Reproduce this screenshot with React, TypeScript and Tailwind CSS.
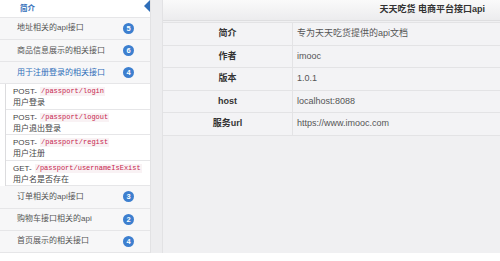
const font = { fontFamily: '"Liberation Sans", "Noto Sans CJK SC", sans-serif' };

interface Group {
  name: string;
  count: number;
  active?: boolean;
}

interface Api {
  method: string;
  path: string;
  desc: string;
}

const topGroups: Group[] = [
  { name: '地址相关的api接口', count: 5 },
  { name: '商品信息展示的相关接口', count: 6 },
  { name: '用于注册登录的相关接口', count: 4, active: true },
];

const apis: Api[] = [
  { method: 'POST', path: '/passport/login', desc: '用户登录' },
  { method: 'POST', path: '/passport/logout', desc: '用户退出登录' },
  { method: 'POST', path: '/passport/regist', desc: '用户注册' },
  { method: 'GET', path: '/passport/usernameIsExist', desc: '用户名是否存在' },
];

const bottomGroups: Group[] = [
  { name: '订单相关的api接口', count: 3 },
  { name: '购物车接口相关的api', count: 2 },
  { name: '首页展示的相关接口', count: 4 },
];

const info = [
  ['简介', '专为天天吃货提供的api文档'],
  ['作者', 'imooc'],
  ['版本', '1.0.1'],
  ['host', 'localhost:8088'],
  ['服务url', 'https://www.imooc.com'],
];

function GroupRow({ g }: { g: Group }) {
  return (
    <div className="h-[22.5px] flex items-center justify-between pl-[17px] pr-[16px] bg-[#f7f7f8] border-b border-[#e6e6e8]">
      <span className={`text-[8px] ${g.active ? 'text-[#2f6eb8]' : 'text-[#555]'}`}>{g.name}</span>
      <span className="w-[11px] h-[11px] rounded-full bg-[#3d7fcf] text-white text-[7.5px] font-bold flex items-center justify-center">
        {g.count}
      </span>
    </div>
  );
}

export default function App() {
  return (
    <div className="w-[500px] h-[261px] bg-white overflow-hidden" style={font}>
      <div className="flex h-[253px]">
        {/* Sidebar */}
        <div className="w-[151px] bg-white border-r border-[#e2e2e4] flex flex-col">
          <div className="h-[18px] flex items-center justify-between pl-[20px] border-b border-[#e6e6e8]">
            <span className="text-[7.5px] font-bold text-[#2f6eb8]">简介</span>
            <span className="w-0 h-0 border-y-[6px] border-y-transparent border-r-[6px] border-r-[#2f6eb8] mb-[4px]" />
          </div>
          {topGroups.map((g) => (
            <GroupRow key={g.name} g={g} />
          ))}
          <div className="pl-[5px] bg-white">
            <div className="border-l border-[#dcdcde]">
              {apis.map((a) => (
                <div key={a.path} className="h-[25.5px] pl-[7px] pt-[2px] border-b border-[#e6e6e8] leading-[11px]">
                  <div className="text-[8px] text-[#444] flex items-center">
                    {a.method}-
                    <span
                      className="ml-[3px] px-[1px] bg-[#f9f2f4] text-[#c7254e] text-[7px] leading-[9px]"
                      style={{ fontFamily: '"Liberation Mono", monospace' }}
                    >
                      {a.path}
                    </span>
                  </div>
                  <div className="text-[8px] text-[#444]">{a.desc}</div>
                </div>
              ))}
            </div>
          </div>
          {bottomGroups.map((g) => (
            <GroupRow key={g.name} g={g} />
          ))}
        </div>

        {/* gutter */}
        <div className="w-[11px] bg-[#ededef]" />

        {/* Main */}
        <div className="flex-1 bg-[#f0f0f2] border-l border-[#e2e2e4]">
          <div className="h-[21px] flex items-center justify-end pr-[15px] bg-gradient-to-b from-[#fafafa] to-[#ececee] border-b border-[#dedee0]">
            <span className="text-[9px] font-bold text-[#333]">天天吃货 电商平台接口api</span>
          </div>
          <div className="mt-[1px] border-t border-[#e3e3e5]">
            {info.map(([k, v]) => (
              <div key={k} className="flex h-[22.6px] bg-[#f3f3f5] border-b border-[#e3e3e5]">
                <div className="w-[130px] flex items-center justify-center text-[9px] font-bold text-[#333] border-r border-[#e3e3e5]">
                  {k}
                </div>
                <div className="flex-1 flex items-center pl-[4px] text-[9px] text-[#555]">{v}</div>
              </div>
            ))}
          </div>
        </div>
      </div>
    </div>
  );
}
